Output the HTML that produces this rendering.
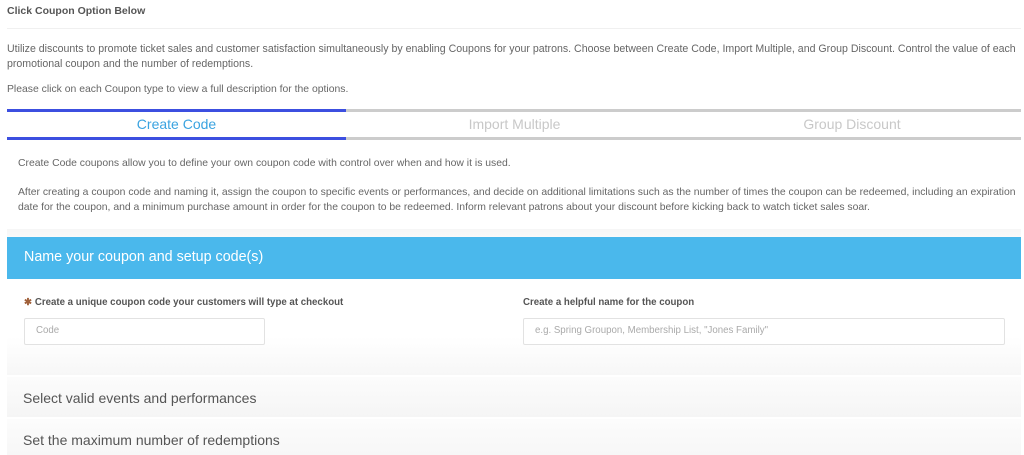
<!DOCTYPE html>
<html><head><style>
body{margin:0;width:1024px;height:455px;overflow:hidden;background:#fff;font-family:"Liberation Sans",sans-serif;color:#666;position:relative}
.a{position:absolute;white-space:nowrap}
</style></head><body>
<div class="a" style="left:7px;top:5px;font-size:10.5px;font-weight:bold;color:#555">Click Coupon Option Below</div>
<div class="a" style="left:7px;top:28px;width:1014px;height:1px;background:#f0f0f0"></div>
<div class="a" style="left:7px;top:42px;font-size:10.6px;line-height:15px;color:#666">Utilize discounts to promote ticket sales and customer satisfaction simultaneously by enabling Coupons for your patrons. Choose between Create Code, Import Multiple, and Group Discount. Control the value of each<br>promotional coupon and the number of redemptions.</div>
<div class="a" style="left:7px;top:84px;font-size:10.4px;color:#666">Please click on each Coupon type to view a full description for the options.</div>
<div class="a" style="left:7px;top:109px;width:339px;height:3px;background:#3c4fe0"></div>
<div class="a" style="left:346px;top:109px;width:675px;height:3px;background:#ccc"></div>
<div class="a" style="left:7px;top:137px;width:339px;height:3px;background:#3c4fe0"></div>
<div class="a" style="left:346px;top:137px;width:675px;height:3px;background:#ccc"></div>
<div class="a" style="left:7px;top:116px;width:339px;text-align:center;font-size:14px;color:#3aa3e0">Create Code</div>
<div class="a" style="left:346px;top:116px;width:337px;text-align:center;font-size:14px;color:#c8c8c8">Import Multiple</div>
<div class="a" style="left:683px;top:116px;width:338px;text-align:center;font-size:14px;color:#c8c8c8">Group Discount</div>
<div class="a" style="left:18px;top:158px;font-size:10.4px;color:#666">Create Code coupons allow you to define your own coupon code with control over when and how it is used.</div>
<div class="a" style="left:18px;top:185px;font-size:10.4px;line-height:15px;color:#666">After creating a coupon code and naming it, assign the coupon to specific events or performances, and decide on additional limitations such as the number of times the coupon can be redeemed, including an expiration<br>date for the coupon, and a minimum purchase amount in order for the coupon to be redeemed. Inform relevant patrons about your discount before kicking back to watch ticket sales soar.</div>
<div class="a" style="left:7px;top:229px;width:1014px;height:226px;background:linear-gradient(#f6f6f6,#fff 20px)"></div>
<div class="a" style="left:7px;top:237px;width:1014px;height:42px;background:#4ab8ec"></div>
<div class="a" style="left:24px;top:249px;font-size:14.3px;color:#fff">Name your coupon and setup code(s)</div>
<div class="a" style="left:7px;top:279px;width:1014px;height:96px;background:linear-gradient(#fff 60%,#f7f7f7)"></div>
<div class="a" style="left:24px;top:297px;font-size:9.7px;font-weight:bold;color:#555"><span style="color:#a0603a">&#10033;</span> Create a unique coupon code your customers will type at checkout</div>
<div class="a" style="left:523px;top:297px;font-size:9.7px;font-weight:bold;color:#555">Create a helpful name for the coupon</div>
<div class="a" style="left:24px;top:318px;width:239px;height:25px;border:1px solid #e2e2e2;border-radius:2px;background:#fff"></div>
<div class="a" style="left:36px;top:325px;font-size:9.7px;color:#aaa">Code</div>
<div class="a" style="left:523px;top:318px;width:480px;height:25px;border:1px solid #e2e2e2;border-radius:2px;background:#fff"></div>
<div class="a" style="left:535px;top:325px;font-size:9.7px;color:#aaa">e.g. Spring Groupon, Membership List, "Jones Family"</div>
<div class="a" style="left:7px;top:377px;width:1014px;height:40px;background:linear-gradient(#fcfcfc,#f5f5f5)"></div>
<div class="a" style="left:23px;top:390px;font-size:14px;color:#555">Select valid events and performances</div>
<div class="a" style="left:7px;top:419px;width:1014px;height:36px;background:linear-gradient(#fcfcfc,#f7f7f7)"></div>
<div class="a" style="left:23px;top:432px;font-size:14px;color:#555">Set the maximum number of redemptions</div>
</body></html>
